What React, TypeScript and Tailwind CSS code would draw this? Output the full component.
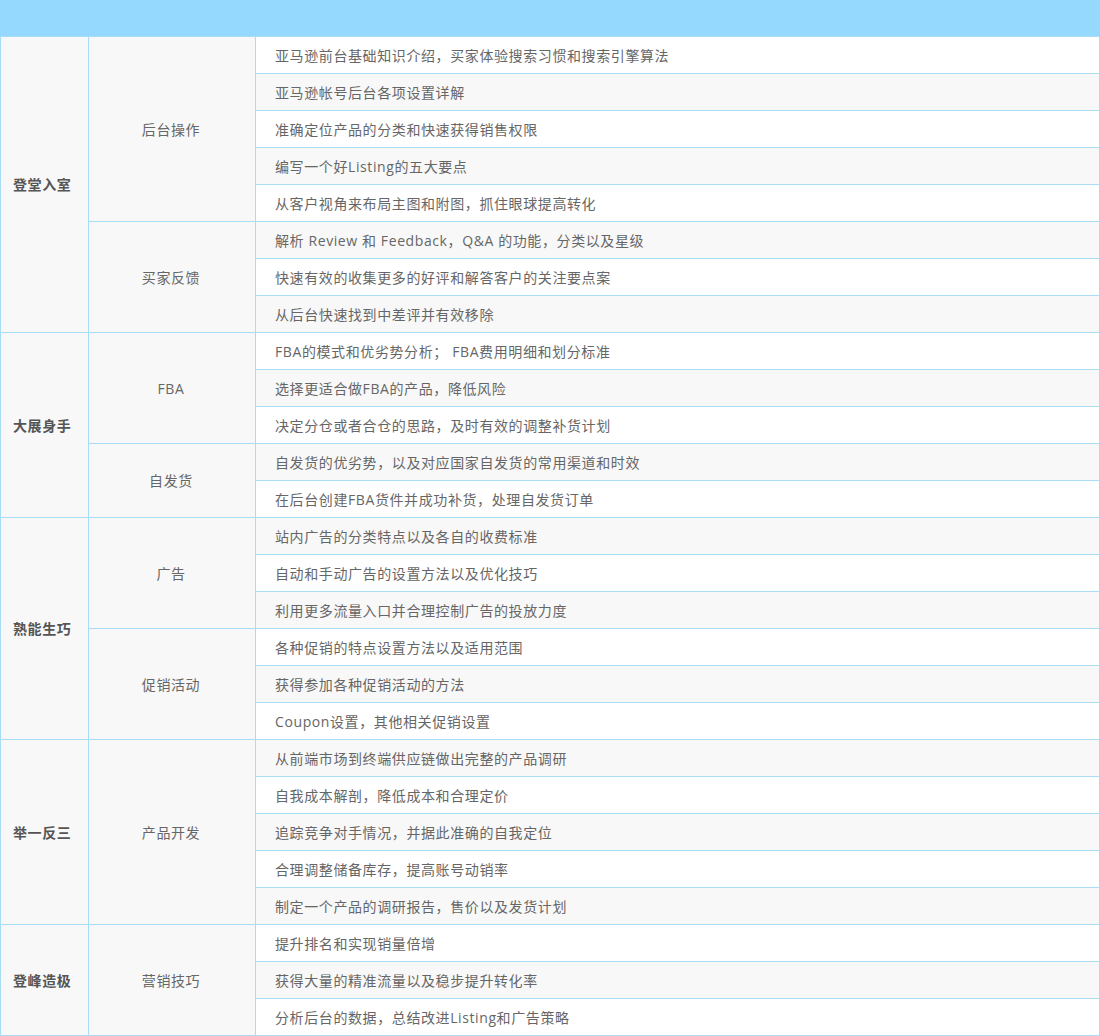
import React from 'react';

const groups = [
  { name: '登堂入室', subs: [
    { name: '后台操作', items: ['亚马逊前台基础知识介绍，买家体验搜索习惯和搜索引擎算法', '亚马逊帐号后台各项设置详解', '准确定位产品的分类和快速获得销售权限', '编写一个好Listing的五大要点', '从客户视角来布局主图和附图，抓住眼球提高转化'] },
    { name: '买家反馈', items: ['解析 Review 和 Feedback，Q&A 的功能，分类以及星级', '快速有效的收集更多的好评和解答客户的关注要点案', '从后台快速找到中差评并有效移除'] },
  ] },
  { name: '大展身手', subs: [
    { name: 'FBA', items: ['FBA的模式和优劣势分析； FBA费用明细和划分标准', '选择更适合做FBA的产品，降低风险', '决定分仓或者合仓的思路，及时有效的调整补货计划'] },
    { name: '自发货', items: ['自发货的优劣势，以及对应国家自发货的常用渠道和时效', '在后台创建FBA货件并成功补货，处理自发货订单'] },
  ] },
  { name: '熟能生巧', subs: [
    { name: '广告', items: ['站内广告的分类特点以及各自的收费标准', '自动和手动广告的设置方法以及优化技巧', '利用更多流量入口并合理控制广告的投放力度'] },
    { name: '促销活动', items: ['各种促销的特点设置方法以及适用范围', '获得参加各种促销活动的方法', 'Coupon设置，其他相关促销设置'] },
  ] },
  { name: '举一反三', subs: [
    { name: '产品开发', items: ['从前端市场到终端供应链做出完整的产品调研', '自我成本解剖，降低成本和合理定价', '追踪竞争对手情况，并据此准确的自我定位', '合理调整储备库存，提高账号动销率', '制定一个产品的调研报告，售价以及发货计划'] },
  ] },
  { name: '登峰造极', subs: [
    { name: '营销技巧', items: ['提升排名和实现销量倍增', '获得大量的精准流量以及稳步提升转化率', '分析后台的数据，总结改进Listing和广告策略'] },
  ] },
];

export default function App() {
  let idx = 0;
  const rows: React.ReactNode[] = [];
  groups.forEach((g) => {
    const gCount = g.subs.reduce((n, s) => n + s.items.length, 0);
    g.subs.forEach((s, si) => {
      s.items.forEach((it, ii) => {
        const i = idx++;
        rows.push(
          <tr key={i} className="h-[37px]">
            {si === 0 && ii === 0 && (
              <td rowSpan={gCount} className="w-[88px] border border-[#a9dcf5] bg-[#f8f8f8] pl-[12px] text-left font-bold text-[#555]">{g.name}</td>
            )}
            {ii === 0 && (
              <td rowSpan={s.items.length} className="w-[167px] border border-[#a9dcf5] bg-[#f8f8f8] pr-[2px] text-center text-[#666]">{s.name}</td>
            )}
            <td className={`border border-[#a9dcf5] pl-[19px] text-[#666] ${i % 2 === 1 ? 'bg-[#f8f8f8]' : 'bg-white'}`}>{it}</td>
          </tr>
        );
      });
    });
  });
  return (
    <div className="w-[1100px] bg-white text-[14px] tracking-[0.6px]" style={{ fontFamily: '"Open Sans", "Noto Sans CJK SC", sans-serif' }}>
      <div className="h-[36px] bg-[#96d9fe]" />
      <table className="w-full border-collapse table-fixed">
        <colgroup>
          <col className="w-[88px]" />
          <col className="w-[167px]" />
          <col />
        </colgroup>
        <tbody>{rows}</tbody>
      </table>
    </div>
  );
}
